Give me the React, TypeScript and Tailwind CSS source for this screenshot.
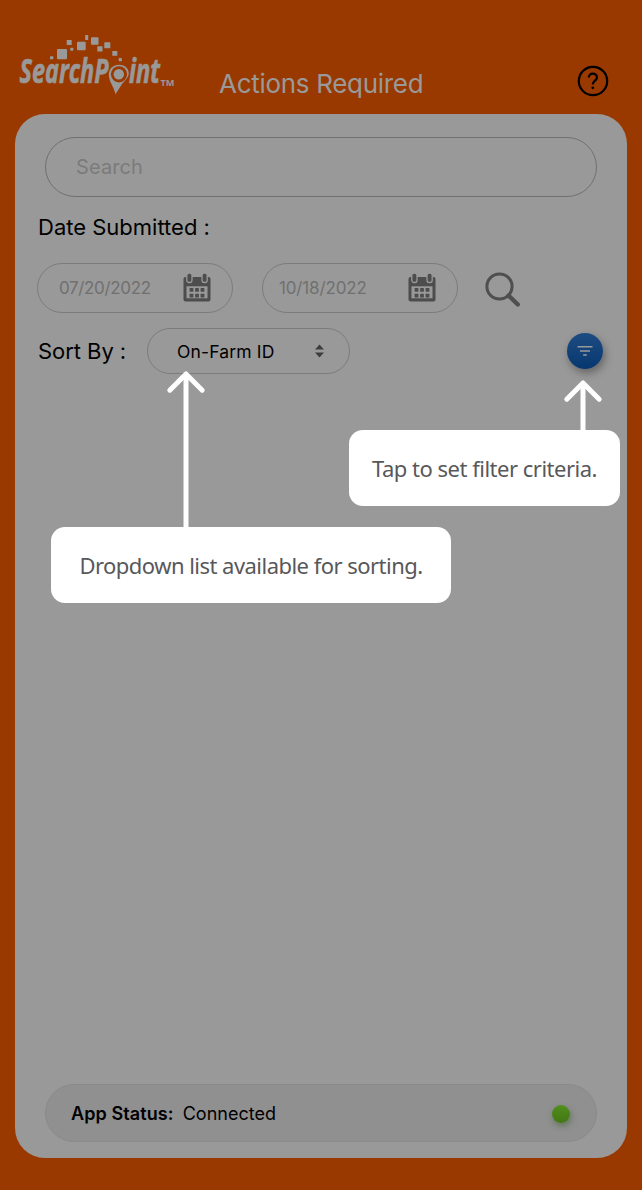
import React from "react";

function Logo() {
  return (
    <svg width="165" height="70" viewBox="15 30 165 70" className="block shrink-0" fill="#999999">
      <rect x="50" y="56.3" width="3.3" height="3" rx=".5" />
      <rect x="57" y="49" width="10" height="10.3" rx="1" />
      <rect x="66.7" y="40" width="5" height="5" rx=".5" />
      <rect x="70.3" y="47.7" width="3" height="3" rx=".5" />
      <rect x="77" y="41.7" width="8.7" height="8.5" rx="1" />
      <rect x="85.2" y="35" width="3" height="5" rx=".5" />
      <rect x="91" y="37.3" width="7.5" height="7.5" rx="1" />
      <rect x="97.3" y="46.3" width="5.2" height="5.2" rx=".5" />
      <rect x="104.3" y="42.3" width="6" height="6" rx=".5" />
      <rect x="112.3" y="51" width="5" height="4.8" rx=".5" />
      <rect x="118.7" y="58" width="3.2" height="3.2" rx=".5" />
      <g fontFamily="'Open Sans', sans-serif" fontWeight="700" fontStyle="italic" fontSize="34" stroke="#999999" strokeWidth=".7">
        <text x="19.5" y="83.3" textLength="89" lengthAdjust="spacingAndGlyphs">SearchP</text>
        <text x="129" y="83.3" textLength="31" lengthAdjust="spacingAndGlyphs">int</text>
      </g>
      <path d="M108.800 75C108.800 69 113 64.800 119 64.800s10.200 4.200 9.700 9.200c-.5 4-4 6.500-7 10.500l-6.200 9.700c-1-6-6.700-13.200-6.700-19.200z" />
      <circle cx="119" cy="74.300" r="8.100" fill="#993900" />
      <circle cx="118.800" cy="74.300" r="5.200" />
      <text x="160.500" y="86" fontFamily="'Open Sans', sans-serif" fontWeight="700" fontSize="9" textLength="14" lengthAdjust="spacingAndGlyphs">TM</text>
    </svg>
  );
}

function CalendarIcon() {
  return (
    <svg width="28" height="29" viewBox="0 0 28 29" className="mb-[2px] block shrink-0">
      <rect x=".5" y="4" width="27" height="24.500" rx="2" fill="#4d4d4d" />
      <rect x="3.500" y="13.300" width="21" height="12" fill="#999999" />
      <g fill="#4d4d4d" stroke="#999999" strokeWidth="1.300">
        <rect x="3.800" y="0" width="5.200" height="9.500" rx="2.200" />
        <rect x="19" y="0" width="5.200" height="9.500" rx="2.200" />
      </g>
      <g fill="#4d4d4d">
        <rect x="6.600" y="15" width="3.800" height="3.800" rx=".6" />
        <rect x="12.100" y="15" width="3.800" height="3.800" rx=".6" />
        <rect x="17.600" y="15" width="3.800" height="3.800" rx=".6" />
        <rect x="6.600" y="20.700" width="3.800" height="3.800" rx=".6" />
        <rect x="12.100" y="20.700" width="3.800" height="3.800" rx=".6" />
        <rect x="17.600" y="20.700" width="3.800" height="3.800" rx=".6" />
      </g>
    </svg>
  );
}

function DateField({ value, className }: { value: string; className: string }) {
  return (
    <div className={`flex h-[50px] w-[196px] items-center justify-between rounded-full border border-[#7c7c7c] pr-[21px] ${className}`}>
      <span className="mt-[2px] whitespace-nowrap text-[17px] text-[#707070]">{value}</span>
      <CalendarIcon />
    </div>
  );
}

function Arrow({ height, className }: { height: number; className: string }) {
  return (
    <svg width="40" height={height} className={className} fill="none" stroke="#fff" strokeLinecap="round">
      <path d={`M20 4V${height}`} strokeWidth="5" strokeLinecap="butt" />
      <path d="M3.800 20.200L20 4L36.200 20.200" strokeWidth="5" strokeLinejoin="round" />
    </svg>
  );
}

export default function App() {
  return (
    <div className="relative flex h-[1190px] w-[642px] flex-col overflow-hidden bg-[#993900] font-['Inter',sans-serif] text-black">
      <header className="flex h-[114px] items-start pl-[15px] pr-[33px] pt-[30px]">
        <Logo />
        <h1 className="ml-[39px] mt-[38px] whitespace-nowrap text-[26px] leading-[32px] tracking-[-0.3px] text-[#999999]">Actions Required</h1>
        <svg width="32" height="32" viewBox="0 0 32 32" className="ml-auto mt-[35px] block" fill="none" stroke="#000">
          <circle cx="16" cy="16" r="14.200" strokeWidth="2.200" />
          <path d="M11.800 12.600c0-2.300 1.700-4 4-4s4.100 1.600 4.100 3.800c0 3.200-4.100 3.400-4.100 7.200" strokeWidth="2.200" />
          <circle cx="15.800" cy="22.800" r="1.400" fill="#000" stroke="none" />
        </svg>
      </header>

      <main className="mx-[15px] flex h-[1044px] flex-col rounded-[30px] bg-[#999999] pt-[23px]">
        <div className="mx-[30px] flex h-[60px] items-center rounded-full border border-[#707070] pl-[30px] text-[20px] tracking-[0.1px] text-[#7b7b7b]">Search</div>
        <div className="ml-[23px] mt-[14px] text-[22px] leading-[32px]">Date Submitted :</div>
        <div className="ml-[22px] mt-[20px] flex items-center">
          <DateField value="07/20/2022" className="pl-[21px] tracking-[-0.35px]" />
          <div className="w-[29px]" />
          <DateField value="10/18/2022" className="pl-[16px] tracking-[-0.15px]" />
          <svg width="38" height="38" viewBox="0 0 38 38" className="ml-[26px] mt-[3px] block" fill="none" stroke="#4f4f4f">
            <circle cx="15.500" cy="15.500" r="12.600" strokeWidth="3" />
            <path d="M24.500 24.500L33.800 33.500" strokeWidth="4.400" strokeLinecap="round" />
          </svg>
        </div>
        <div className="ml-[23px] mr-[24px] mt-[15px] flex h-[46px] items-center">
          <span className="w-[109px] whitespace-nowrap text-[22px] tracking-[-0.05px]">Sort By :</span>
          <div className="flex h-[46px] w-[203px] items-center justify-between rounded-full border border-[#7c7c7c] pl-[29px] pr-[24px]">
            <span className="mt-[2px] whitespace-nowrap text-[17.5px] tracking-[0.15px]">On-Farm ID</span>
            <svg width="11" height="14" viewBox="0 0 11 14" fill="#3d3d3d">
              <path d="M1 5.500L5.500 .5L10 5.500zM1 8.500L5.500 13.500L10 8.500z" />
            </svg>
          </div>
          <div className="ml-auto flex size-[36px] items-center justify-center rounded-full bg-linear-to-b from-[#1c4c82] to-[#06376f] shadow-[2px_4px_8px_rgba(0,0,0,0.35)]">
            <svg width="16" height="12" viewBox="0 0 16 12" stroke="#999" strokeWidth="1.500">
              <path d="M.5 1.800h15M3 6h10M6.200 10.100h3.600" />
            </svg>
          </div>
        </div>

        <footer className="mx-[30px] mb-[16px] mt-auto flex h-[58px] items-center rounded-full border border-[#8a8a8a] bg-[#909090] pl-[25px] pr-[26px] text-[18px]">
          <span className="whitespace-nowrap font-semibold tracking-[0.1px]">App Status:</span>
          <span className="ml-[9px] whitespace-nowrap">Connected</span>
          <span className="ml-auto mt-[2px] size-[18px] rounded-full bg-linear-to-b from-[#508f1c] to-[#437614] shadow-[1px_3px_6px_rgba(50,90,30,0.5)]" />
        </footer>
      </main>

      <Arrow height={160} className="absolute left-[166px] top-[370px]" />
      <Arrow height={54} className="absolute left-[563px] top-[379px]" />
      <div className="absolute left-[349px] top-[430px] flex h-[76px] w-[271px] items-center justify-center rounded-[14px] bg-white font-['Noto_Sans',sans-serif] text-[22px] tracking-[-0.5px] text-[#58585a]">
        <span className="whitespace-nowrap">Tap to set filter criteria.</span>
      </div>
      <div className="absolute left-[51px] top-[527px] flex h-[76px] w-[400px] items-center justify-center rounded-[14px] bg-white font-['Noto_Sans',sans-serif] text-[22px] tracking-[-0.53px] text-[#58585a]">
        <span className="whitespace-nowrap">Dropdown list available for sorting.</span>
      </div>
    </div>
  );
}
